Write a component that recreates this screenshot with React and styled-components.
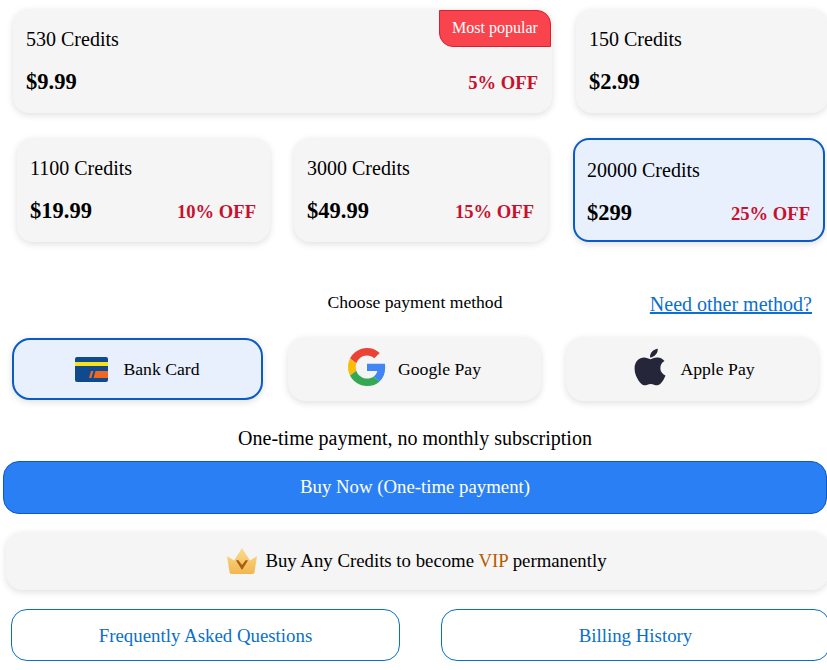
import React from "react";
import styled, { createGlobalStyle } from "styled-components";
import { FaApple } from "react-icons/fa";

const Global = createGlobalStyle`
  html, body { margin: 0; padding: 0; background: #fff; overflow: hidden; }
  body { font-family: "Liberation Serif", "Times New Roman", serif; color: #000; }
`;

const Page = styled.div`
  width: 827px;
  height: 670px;
  padding-top: 9px;
  box-sizing: border-box;
  overflow: hidden;
`;

const PlanRow = styled.div`
  display: flex;
  gap: ${(p) => p.$gap}px;
  padding-left: ${(p) => p.$left}px;
  margin-top: ${(p) => p.$top || 0}px;
`;

const PlanCard = styled.div`
  position: relative;
  flex: none;
  box-sizing: border-box;
  width: ${(p) => p.$w}px;
  height: 104px;
  padding: ${(p) => (p.$selected ? "19px 13px 0 12px" : "19px 14px 0 13px")};
  margin-left: ${(p) => (p.$selected ? 1 : 0)}px;
  border-radius: 16px;
  background: ${(p) => (p.$selected ? "#e8f0fe" : "#f5f5f5")};
  border: ${(p) => (p.$selected ? "2px solid #0a5bc4" : "none")};
  box-shadow: 0 2px 7px rgba(0, 0, 0, 0.13);
`;

const PlanName = styled.div`
  font-size: 20px;
  line-height: 23px;
`;

const PlanFoot = styled.div`
  display: flex;
  justify-content: space-between;
  align-items: center;
  margin-top: 18px;
  height: 26px;
`;

const Price = styled.div`
  font-size: 22.5px;
  font-weight: 700;
`;

const Off = styled.div`
  font-size: 18.6px;
  font-weight: 700;
  color: #c8102e;
  margin-top: 2px;
`;

const Badge = styled.div`
  position: absolute;
  top: 1px;
  right: 1px;
  width: 112px;
  height: 37px;
  box-sizing: border-box;
  padding-top: 7px;
  text-align: center;
  font-size: 16px;
  line-height: 19px;
  color: #fff;
  background: #f9434d;
  border: 1px solid #d81f33;
  border-radius: 0 14px 0 14px;
`;

const MethodHead = styled.div`
  display: grid;
  grid-template-columns: 1fr auto 1fr;
  align-items: center;
  margin-top: 47px;
  height: 24px;
`;

const MethodLabel = styled.div`
  font-size: 17.6px;
  grid-column: 2;
  padding-left: 3px;
`;

const OtherLink = styled.a`
  grid-column: 3;
  justify-self: end;
  margin-right: 15px;
  margin-top: 4px;
  font-size: 20px;
  color: #0a6fd0;
  text-decoration: underline;
`;

const PayRow = styled.div`
  display: flex;
  align-items: center;
  gap: 25px;
  padding-left: 12px;
  margin-top: 24px;
  height: 64px;
`;

const PayBtn = styled.div`
  flex: none;
  box-sizing: border-box;
  width: ${(p) => p.$w}px;
  height: ${(p) => (p.$selected ? 62 : 64)}px;
  display: flex;
  align-items: center;
  justify-content: center;
  gap: ${(p) => p.$gap}px;
  border-radius: 18px;
  font-size: 17.7px;
  background: ${(p) => (p.$selected ? "#e8f0fe" : "#f5f5f5")};
  border: ${(p) => (p.$selected ? "2px solid #0a5bc4" : "none")};
  box-shadow: 0 2px 7px rgba(0, 0, 0, 0.13);
`;

const OneTime = styled.div`
  margin-top: 25px;
  height: 24px;
  line-height: 24px;
  text-align: center;
  font-size: 20px;
  padding-left: 3px;
`;

const BuyBtn = styled.div`
  box-sizing: border-box;
  width: 824px;
  height: 53px;
  margin: 11px 0 0 3px;
  padding-bottom: 2px;
  display: flex;
  align-items: center;
  justify-content: center;
  background: #2b7ff5;
  border: 1px solid #0a5bc4;
  border-radius: 16px;
  color: #fff;
  font-size: 18.8px;
`;

const VipBar = styled.div`
  box-sizing: border-box;
  width: 822px;
  height: 58px;
  margin: 18px 0 0 6px;
  display: flex;
  align-items: center;
  justify-content: center;
  gap: 8px;
  background: #f5f5f5;
  border-radius: 16px;
  box-shadow: 0 2px 7px rgba(0, 0, 0, 0.13);
  font-size: 18.8px;
`;

const Vip = styled.span`
  color: #b85c00;
`;

const LinkRow = styled.div`
  display: flex;
  gap: 41px;
  margin: 19px 0 0 11px;
`;

const LinkBtn = styled.div`
  flex: none;
  box-sizing: border-box;
  width: 389px;
  height: 52px;
  padding-top: 2px;
  display: flex;
  align-items: center;
  justify-content: center;
  border: 1px solid #0a6fc9;
  border-radius: 16px;
  color: #0a6fc9;
  font-size: 18.85px;
`;

const AppleIcon = styled(FaApple)`
  width: 42px;
  height: 42px;
  margin-bottom: 4px;
  color: #26263a;
`;

const GoogleSvg = styled.svg`
  margin-bottom: 4px;
`;

const BankIcon = () => (
  <svg width="33" height="25" viewBox="0 0 33 25">
    <rect width="33" height="25" rx="2" fill="#0f4a8f" />
    <rect y="5" width="33" height="4" fill="#f9e21b" />
    <path d="M14 21l2-7h2.4l-2 7zM18.5 21l2-7H33v7z" fill="#f0671f" />
  </svg>
);

const GoogleIcon = () => (
  <GoogleSvg width="38" height="38" viewBox="0 0 48 48">
    <path fill="#EA4335" d="M24 9.5c3.54 0 6.71 1.22 9.21 3.6l6.85-6.85C35.9 2.38 30.47 0 24 0 14.62 0 6.51 5.38 2.56 13.22l7.98 6.19C12.43 13.72 17.74 9.5 24 9.5z" />
    <path fill="#4285F4" d="M46.98 24.55c0-1.57-.15-3.09-.38-4.55H24v9.02h12.94c-.58 2.96-2.26 5.48-4.78 7.18l7.73 6c4.51-4.18 7.09-10.36 7.09-17.65z" />
    <path fill="#FBBC05" d="M10.53 28.59c-.48-1.45-.76-2.99-.76-4.59s.27-3.14.76-4.59l-7.98-6.19C.92 16.46 0 20.12 0 24c0 3.88.92 7.54 2.56 10.78l7.97-6.19z" />
    <path fill="#34A853" d="M24 48c6.48 0 11.93-2.13 15.89-5.81l-7.73-6c-2.15 1.45-4.92 2.3-8.16 2.3-6.26 0-11.57-4.22-13.47-9.91l-7.98 6.19C6.51 42.62 14.62 48 24 48z" />
  </GoogleSvg>
);

const CrownIcon = () => (
  <svg width="30" height="26" viewBox="0 0 30 26">
    <defs>
      <linearGradient id="crownFill" x1="0" y1="0" x2="0" y2="1">
        <stop offset="0" stopColor="#fbdc8e" />
        <stop offset="1" stopColor="#f2b652" />
      </linearGradient>
    </defs>
    <path d="M0 8l7 4.5L15 0l8 12.5L30 8l-2.5 16a2 2 0 0 1-2 2h-21a2 2 0 0 1-2-2z" fill="url(#crownFill)" />
    <path d="M9 12.5L15 22l6-9.5-2.2-.5L15 17l-3.8-5z" fill="#a8600f" />
  </svg>
);

const Plan = ({ name, price, off, w, selected, children }) => (
  <PlanCard $w={w} $selected={selected}>
    {children}
    <PlanName>{name}</PlanName>
    <PlanFoot>
      <Price>{price}</Price>
      {off && <Off>{off}</Off>}
    </PlanFoot>
  </PlanCard>
);

export default function App() {
  return (
    <Page>
      <Global />
      <PlanRow $left={13} $gap={24}>
        <Plan name="530 Credits" price="$9.99" off="5% OFF" w={539}>
          <Badge>Most popular</Badge>
        </Plan>
        <Plan name="150 Credits" price="$2.99" w={252} />
      </PlanRow>
      <PlanRow $left={17} $gap={24} $top={25}>
        <Plan name="1100 Credits" price="$19.99" off="10% OFF" w={253} />
        <Plan name="3000 Credits" price="$49.99" off="15% OFF" w={254} />
        <Plan name="20000 Credits" price="$299" off="25% OFF" w={252} selected />
      </PlanRow>

      <MethodHead>
        <MethodLabel>Choose payment method</MethodLabel>
        <OtherLink>Need other method?</OtherLink>
      </MethodHead>

      <PayRow>
        <PayBtn $w={251} $gap={15} $selected>
          <BankIcon />
          Bank Card
        </PayBtn>
        <PayBtn $w={253} $gap={12}>
          <GoogleIcon />
          Google Pay
        </PayBtn>
        <PayBtn $w={252} $gap={9}>
          <AppleIcon />
          Apple Pay
        </PayBtn>
      </PayRow>

      <OneTime>One-time payment, no monthly subscription</OneTime>
      <BuyBtn>Buy Now (One-time payment)</BuyBtn>
      <VipBar>
        <CrownIcon />
        <span>
          Buy Any Credits to become <Vip>VIP</Vip> permanently
        </span>
      </VipBar>
      <LinkRow>
        <LinkBtn>Frequently Asked Questions</LinkBtn>
        <LinkBtn>Billing History</LinkBtn>
      </LinkRow>
    </Page>
  );
}
